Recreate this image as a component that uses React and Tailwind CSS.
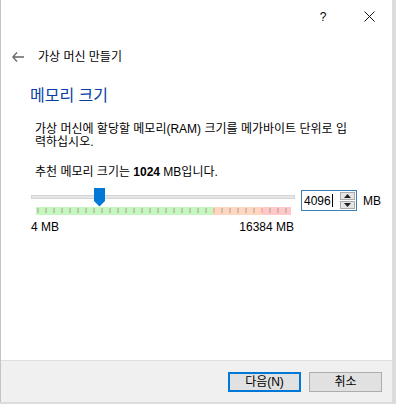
import React from 'react'

const FONT = "font-['Liberation_Sans','Noto_Sans_CJK_KR',sans-serif]"

function Ticks() {
  const ticks = []
  for (let i = 0; i < 32; i++) {
    const x = 1.5 + i * 8
    let c = '#a9a08e'
    if (Math.abs(x - 177) < 4) c = '#e0a078'
    if (Math.abs(x - 227) < 4) c = '#f08c8c'
    ticks.push(<rect key={i} x={x} y="1" width="1" height="5" fill={c} />)
  }
  return (
    <svg width="255" height="8" className="block">
      <rect x="0" y="0" width="177" height="8" fill="#c6f7c0" />
      <rect x="177" y="0" width="50" height="8" fill="#ffd6c0" />
      <rect x="227" y="0" width="28" height="8" fill="#ffc8c8" />
      {ticks}
    </svg>
  )
}

function SpinBox() {
  return (
    <div className="flex items-center w-[56px] h-[21px] border border-[#3c7fb1] bg-white">
      <span className="pl-[2px] text-[12px] leading-none text-black">4096</span>
      <span className="w-px h-[13px] bg-black ml-px" />
      <div className="ml-auto mr-px flex flex-col gap-px">
        <div className="w-[15px] h-[8px] bg-[#e5e5e5] border border-[#acacac] flex items-center justify-center">
          <svg width="7" height="4"><polygon points="3.5,0 7,4 0,4" fill="#222" /></svg>
        </div>
        <div className="w-[15px] h-[8px] bg-[#e5e5e5] border border-[#acacac] flex items-center justify-center">
          <svg width="7" height="4"><polygon points="0,0 7,0 3.5,4" fill="#222" /></svg>
        </div>
      </div>
    </div>
  )
}

export default function App() {
  return (
    <div className={`w-[396px] h-[404px] bg-[#dcdcdc] overflow-hidden ${FONT}`}>
      <div className="w-[392px] h-[402px] bg-white border-l border-[#c4c4c4] flex flex-col text-black">
        {/* caption */}
        <div className="flex justify-end h-[33px]">
          <div className="w-[46px] flex items-center justify-center text-[12px] pt-px">?</div>
          <div className="w-[46px] flex items-center justify-center">
            <svg width="11" height="11" viewBox="0 0 11 11">
              <path d="M0.5 0.5 L10.5 10.5 M10.5 0.5 L0.5 10.5" stroke="#111" strokeWidth="1" />
            </svg>
          </div>
        </div>

        {/* header */}
        <div className="flex items-center h-[42px] pt-[5px] pl-[11px]">
          <svg width="12" height="10" viewBox="0 0 12 10">
            <path d="M5 0.5 L0.8 5 L5 9.5 M0.8 5 H12" stroke="#666" strokeWidth="1.3" fill="none" />
          </svg>
          <span className="ml-[14px] text-[12px] leading-none">가상 머신 만들기</span>
        </div>

        {/* body */}
        <div className="pl-[29px] pt-[12px]">
          <div className="text-[16px] leading-[18px] text-[#0a3ea6]">메모리 크기</div>
          <div className="pl-[5px] mt-[18px] text-[12px] leading-[13px]">
            가상 머신에 할당할 메모리(RAM) 크기를 메가바이트 단위로 입<br />력하십시오.
          </div>
          <div className="pl-[5px] mt-[17px] text-[12px] leading-[13px]">
            추천 메모리 크기는 <b>1024</b> MB입니다.
          </div>

          <div className="flex items-start mt-[8px]">
            <div className="w-[265px] pl-px">
              <div className="relative h-[19px]">
                <div className="absolute left-0 right-0 top-[8px] h-[4px] bg-[#e6e6e6] border border-[#d4d4d4]" />
                <svg className="absolute left-[63px] top-[1px]" width="11" height="19" viewBox="0 0 11 19">
                  <polygon points="0,0 11,0 11,13 5.5,18.5 0,13" fill="#0078d7" />
                </svg>
              </div>
              <div className="pl-[5px] mt-[1px]">
                <Ticks />
              </div>
              <div className="flex justify-between mt-[5px] text-[12px] leading-[14px] pr-[1px]">
                <span>4 MB</span>
                <span>16384 MB</span>
              </div>
            </div>
            <div className="flex items-center mt-[3px]">
              <div className="ml-[6px]">
                <SpinBox />
              </div>
              <span className="ml-[6px] text-[12px] leading-[14px]">MB</span>
            </div>
          </div>
        </div>

        {/* footer */}
        <div className="mt-auto h-[42px] bg-[#f0f0f0] border-t border-[#dfdfdf] flex items-center justify-end pr-[10px] gap-[8px]">
          <button className="w-[73px] h-[20px] bg-[#e1e1e1] border-2 border-[#0078d7] text-[12px] leading-none flex items-center justify-center">
            다음(N)
          </button>
          <button className="w-[73px] h-[20px] bg-[#e1e1e1] border border-[#adadad] text-[12px] leading-none flex items-center justify-center">
            취소
          </button>
        </div>
      </div>
    </div>
  )
}
